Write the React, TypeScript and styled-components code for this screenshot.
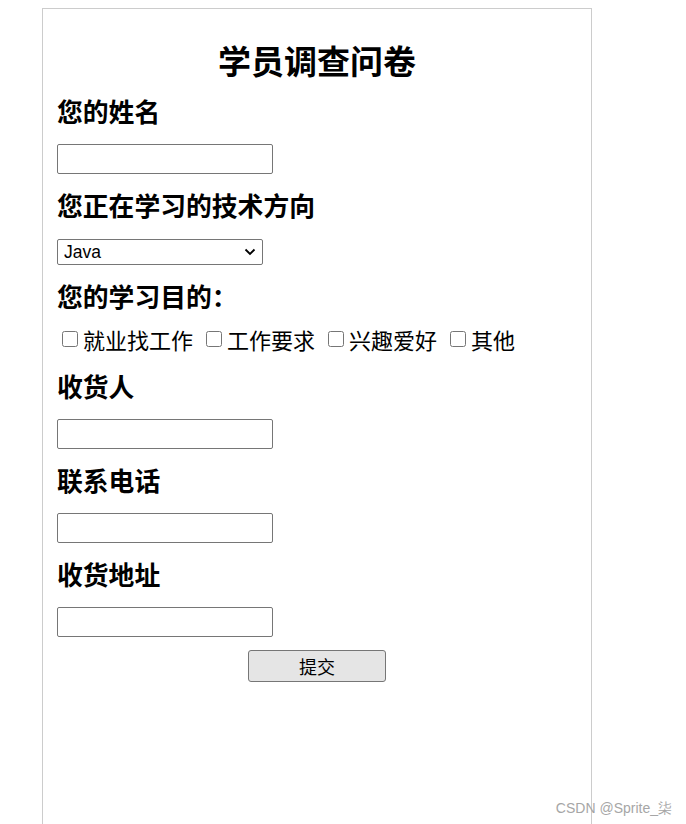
import React from "react";
import styled, { createGlobalStyle } from "styled-components";

const GlobalStyle = createGlobalStyle`
  html, body {
    margin: 0;
    padding: 0;
    background: #ffffff;
    overflow: hidden;
  }
  body {
    font-family: "Noto Sans CJK SC", "Liberation Sans", sans-serif;
    color: #000;
  }
`;

const Page = styled.div`
  padding-top: 8px;
  padding-left: 42px;
  height: 824px;
  box-sizing: border-box;
`;

const Survey = styled.form`
  width: 550px;
  height: 900px;
  box-sizing: border-box;
  border: 1px solid #cccccc;
  padding: 29px 14px 0 14px;
  display: flex;
  flex-direction: column;
  align-items: flex-start;
  gap: 14px;
`;

const Title = styled.h1`
  align-self: stretch;
  margin: 0 0 -2px 0;
  font-size: 33px;
  line-height: 44px;
  font-weight: 700;
  text-align: center;
  font-family: "Noto Sans CJK SC", sans-serif;
`;

const Question = styled.h2<{ $tight?: boolean }>`
  margin: ${(p) => (p.$tight ? "-1px 0 0 0" : "0")};
  font-size: 25.8px;
  line-height: 34px;
  padding-bottom: 2px;
  font-weight: 700;
  font-family: "Noto Sans CJK SC", sans-serif;
`;

const TextField = styled.input`
  width: 216px;
  height: 30px;
  box-sizing: border-box;
  margin: 0;
  border: 1px solid #767676;
  border-radius: 2px;
  background: #fff;
  font-size: 17px;
`;

const SelectWrap = styled.div`
  position: relative;
  width: 206px;
  height: 26px;
  margin-top: 1px;
`;

const Select = styled.select`
  appearance: none;
  -webkit-appearance: none;
  width: 206px;
  height: 26px;
  box-sizing: border-box;
  margin: 0;
  border: 1px solid #767676;
  border-radius: 2px;
  background: #fff;
  color: #000;
  font-family: "Liberation Sans", Arial, sans-serif;
  font-size: 17.5px;
  line-height: 24px;
  padding: 0 24px 0 6px;
  outline: none;
`;

const Chevron = styled.svg`
  position: absolute;
  right: 7px;
  top: 9px;
  width: 12px;
  height: 8px;
  pointer-events: none;
`;

const Options = styled.div`
  display: flex;
  align-items: center;
  gap: 8px;
  height: 30px;
  margin: -5px 0 2px 0;
`;

const Option = styled.label`
  display: flex;
  align-items: center;
  font-size: 22px;
  line-height: 30px;
  font-family: "Noto Sans CJK SC", sans-serif;
`;

const Check = styled.input`
  width: 16px;
  height: 16px;
  margin: 0 5px 0 5px;
`;

const Submit = styled.button`
  align-self: center;
  width: 138px;
  height: 32px;
  box-sizing: border-box;
  margin-top: -1px;
  border: 1px solid #767676;
  border-radius: 3px;
  background: #e5e5e5;
  color: #000;
  font-family: "Noto Sans CJK SC", sans-serif;
  font-size: 18px;
  line-height: 1;
  padding: 0;
`;

const Watermark = styled.div`
  position: absolute;
  right: 14px;
  bottom: 6px;
  font-family: "Liberation Sans", Arial, sans-serif;
  font-size: 14px;
  color: #a6a6a6;
`;

const goals = ["就业找工作", "工作要求", "兴趣爱好", "其他"];

export default function App() {
  return (
    <>
      <GlobalStyle />
      <Page>
        <Survey onSubmit={(e) => e.preventDefault()}>
          <Title>学员调查问卷</Title>
          <Question>您的姓名</Question>
          <TextField type="text" />
          <Question>您正在学习的技术方向</Question>
          <SelectWrap>
            <Select defaultValue="Java">
              <option>Java</option>
              <option>前端</option>
              <option>Python</option>
            </Select>
            <Chevron viewBox="0 0 12 8">
              <path d="M1.5 1.5 L6 6 L10.5 1.5" fill="none" stroke="#000" strokeWidth="1.8" />
            </Chevron>
          </SelectWrap>
          <Question>您的学习目的：</Question>
          <Options>
            {goals.map((g) => (
              <Option key={g}>
                <Check type="checkbox" />
                {g}
              </Option>
            ))}
          </Options>
          <Question $tight>收货人</Question>
          <TextField type="text" />
          <Question>联系电话</Question>
          <TextField type="text" />
          <Question>收货地址</Question>
          <TextField type="text" />
          <Submit type="submit">提交</Submit>
        </Survey>
      </Page>
      <Watermark>CSDN @Sprite_柒</Watermark>
    </>
  );
}
